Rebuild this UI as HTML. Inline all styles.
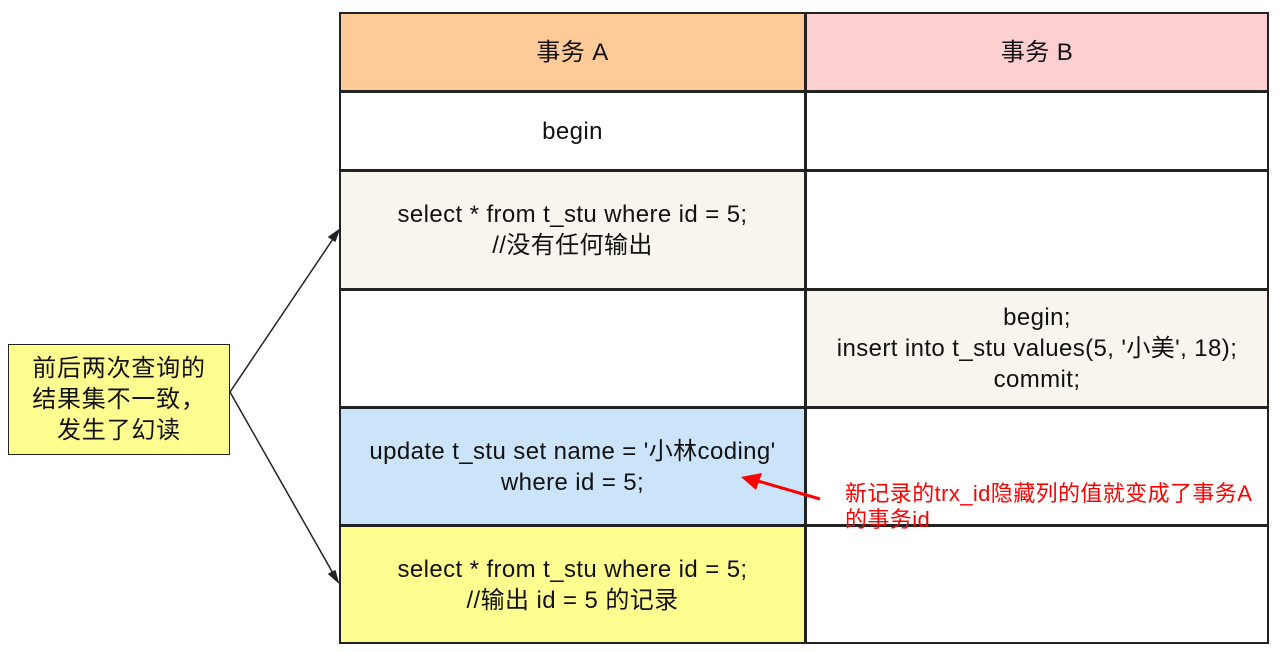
<!DOCTYPE html>
<html><head><meta charset="utf-8"><style>
body{margin:0;width:1280px;height:652px;background:#fff;position:relative;font-family:"Liberation Sans","Noto Sans CJK SC",sans-serif;overflow:hidden}
.c{position:absolute;box-sizing:border-box;border:2px solid #222;display:flex;align-items:center;justify-content:center;text-align:center;font-size:24px;letter-spacing:0.4px;line-height:31px;color:#111;white-space:nowrap}
</style></head><body>
<div class="c" style="left:339px;top:12px;width:467px;height:80px;background:#fdca98">事务 A</div>
<div class="c" style="left:805px;top:12px;width:464px;height:80px;background:#fcd0d1">事务 B</div>
<div class="c" style="left:339px;top:91px;width:467px;height:80px;background:#fff">begin</div>
<div class="c" style="left:805px;top:91px;width:464px;height:80px;background:#fff"></div>
<div class="c" style="left:339px;top:170px;width:467px;height:120px;background:#f7f5ed">select * from t_stu where id = 5;<br>//没有任何输出</div>
<div class="c" style="left:805px;top:170px;width:464px;height:120px;background:#fff"></div>
<div class="c" style="left:339px;top:289px;width:467px;height:119px;background:#fff"></div>
<div class="c" style="left:805px;top:289px;width:464px;height:119px;background:#f7f5ed">begin;<br>insert into t_stu values(5, '小美', 18);<br>commit;</div>
<div class="c" style="left:339px;top:407px;width:467px;height:119px;background:#cce4f9">update t_stu set name = '小林coding'<br>where id = 5;</div>
<div class="c" style="left:805px;top:407px;width:464px;height:119px;background:#fff"></div>
<div class="c" style="left:339px;top:525px;width:467px;height:119px;background:#fefd90">select * from t_stu where id = 5;<br>//输出 id = 5 的记录</div>
<div class="c" style="left:805px;top:525px;width:464px;height:119px;background:#fff"></div>
<div class="c" style="left:8px;top:344px;width:222px;height:111px;background:#fefd90;border-width:1.5px;line-height:31px;font-size:24px;letter-spacing:0.8px">前后两次查询的<br>结果集不一致，<br>发生了幻读</div>
<svg style="position:absolute;left:0;top:0" width="1280" height="652">
<g stroke="#222" stroke-width="1.5" fill="#222">
<line x1="230" y1="392" x2="335" y2="236"/><polygon points="339,230 329,237 335,241"/>
<line x1="230" y1="392" x2="334" y2="575"/><polygon points="338,582 329,574 335,571"/>
</g>
<line x1="820" y1="499" x2="758" y2="481" stroke="#f00" stroke-width="3"/>
<polygon points="741,477 762,473 756,490" fill="#f00"/>
</svg>
<div style="position:absolute;left:845px;top:481px;font-size:22px;letter-spacing:0.4px;line-height:26px;color:#f00;white-space:nowrap">新记录的trx_id隐藏列的值就变成了事务A<br>的事务id</div>
</body></html>
